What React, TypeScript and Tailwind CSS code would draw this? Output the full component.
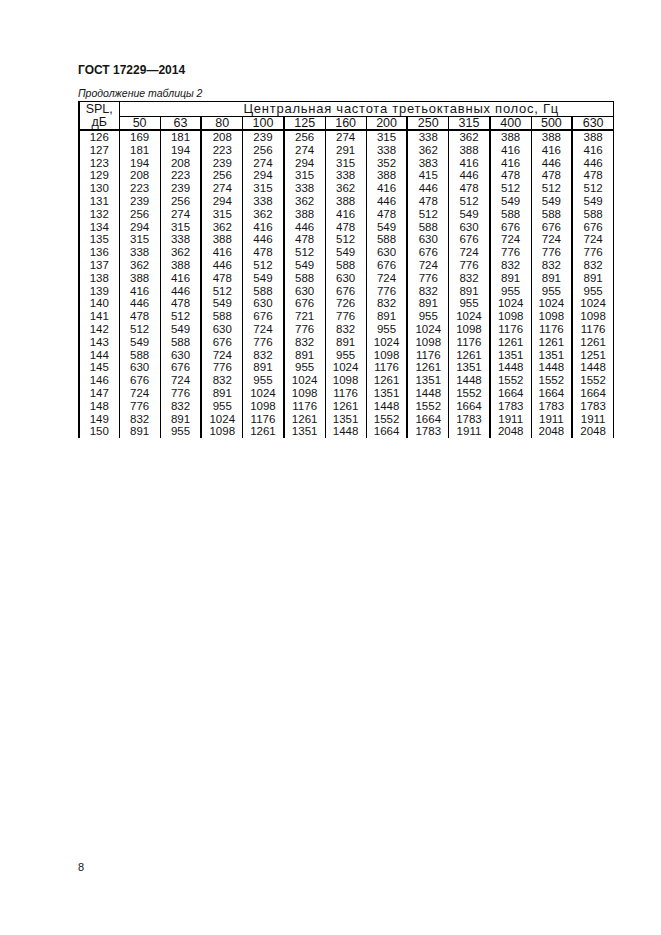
import React from 'react';

const freqs = ['50', '63', '80', '100', '125', '160', '200', '250', '315', '400', '500', '630'];

// SPL, dB -> values for each third-octave band
const rows: [string, string[]][] = [
  ['126', ['169', '181', '208', '239', '256', '274', '315', '338', '362', '388', '388', '388']],
  ['127', ['181', '194', '223', '256', '274', '291', '338', '362', '388', '416', '416', '416']],
  ['123', ['194', '208', '239', '274', '294', '315', '352', '383', '416', '416', '446', '446']],
  ['129', ['208', '223', '256', '294', '315', '338', '388', '415', '446', '478', '478', '478']],
  ['130', ['223', '239', '274', '315', '338', '362', '416', '446', '478', '512', '512', '512']],
  ['131', ['239', '256', '294', '338', '362', '388', '446', '478', '512', '549', '549', '549']],
  ['132', ['256', '274', '315', '362', '388', '416', '478', '512', '549', '588', '588', '588']],
  ['134', ['294', '315', '362', '416', '446', '478', '549', '588', '630', '676', '676', '676']],
  ['135', ['315', '338', '388', '446', '478', '512', '588', '630', '676', '724', '724', '724']],
  ['136', ['338', '362', '416', '478', '512', '549', '630', '676', '724', '776', '776', '776']],
  ['137', ['362', '388', '446', '512', '549', '588', '676', '724', '776', '832', '832', '832']],
  ['138', ['388', '416', '478', '549', '588', '630', '724', '776', '832', '891', '891', '891']],
  ['139', ['416', '446', '512', '588', '630', '676', '776', '832', '891', '955', '955', '955']],
  ['140', ['446', '478', '549', '630', '676', '726', '832', '891', '955', '1024', '1024', '1024']],
  ['141', ['478', '512', '588', '676', '721', '776', '891', '955', '1024', '1098', '1098', '1098']],
  ['142', ['512', '549', '630', '724', '776', '832', '955', '1024', '1098', '1176', '1176', '1176']],
  ['143', ['549', '588', '676', '776', '832', '891', '1024', '1098', '1176', '1261', '1261', '1261']],
  ['144', ['588', '630', '724', '832', '891', '955', '1098', '1176', '1261', '1351', '1351', '1251']],
  ['145', ['630', '676', '776', '891', '955', '1024', '1176', '1261', '1351', '1448', '1448', '1448']],
  ['146', ['676', '724', '832', '955', '1024', '1098', '1261', '1351', '1448', '1552', '1552', '1552']],
  ['147', ['724', '776', '891', '1024', '1098', '1176', '1351', '1448', '1552', '1664', '1664', '1664']],
  ['148', ['776', '832', '955', '1098', '1176', '1261', '1448', '1552', '1664', '1783', '1783', '1783']],
  ['149', ['832', '891', '1024', '1176', '1261', '1351', '1552', '1664', '1783', '1911', '1911', '1911']],
  ['150', ['891', '955', '1098', '1261', '1351', '1448', '1664', '1783', '1911', '2048', '2048', '2048']],
];

// left border of each band column (scan shows some rules heavier than others)
const colBorder = [
  'border-l border-l-black',
  'border-l border-l-black',
  'border-l-2 border-l-black',
  'border-l border-l-black',
  'border-l-2 border-l-black',
  'border-l border-l-black',
  'border-l border-l-black',
  'border-l-2 border-l-black',
  'border-l border-l-black',
  'border-l-2 border-l-black',
  'border-l border-l-black',
  'border-l-2 border-l-black',
];

export default function App() {
  return (
    <div
      className="w-[661px] h-[935px] bg-white text-[#151515] flex flex-col pl-[78px] pr-[47px]"
      style={{ fontFamily: '"Liberation Sans", Arial, sans-serif' }}
    >
      <div className="pt-[63px] text-[12px] leading-[14px] font-bold">ГОСТ 17229—2014</div>
      <div className="mt-[10px] text-[10.5px] leading-[13px] italic">Продолжение таблицы 2</div>

      <table className="mt-[1px] w-[536px] table-fixed border-collapse">
        <colgroup>
          <col className="w-[40px]" />
          {freqs.map((f) => (
            <col key={f} />
          ))}
        </colgroup>
        <thead>
          <tr>
            <th
              rowSpan={2}
              className="border-l-2 border-l-black border-t border-t-black border-b-2 border-b-black p-0 text-center align-top font-normal text-[12.5px] leading-[12.5px] pt-[1px]"
            >
              SPL,
              <br />
              дБ
            </th>
            <th
              colSpan={12}
              className="h-[15px] border-l border-l-black border-t border-t-black border-r border-r-black border-b border-b-black p-0 pl-[124px] text-left font-normal text-[13px] tracking-[0.75px] leading-[14px]"
            >
              Центральная частота третьоктавных полос, Гц
            </th>
          </tr>
          <tr>
            {freqs.map((f, i) => (
              <th
                key={f}
                className={`${colBorder[i]} ${i === 11 ? 'border-r border-r-black' : ''} h-[13px] border-b-2 border-b-black p-0 text-center font-normal text-[12.5px] leading-[12px]`}
              >
                {f}
              </th>
            ))}
          </tr>
        </thead>
        <tbody>
          {rows.map(([spl, vals]) => (
            <tr key={spl}>
              <td className="h-[12.8px] border-l-2 border-l-black p-0 text-center text-[11.5px] leading-[12.8px]">{spl}</td>
              {vals.map((v, i) => (
                <td
                  key={i}
                  className={`${colBorder[i]} ${i === 11 ? 'border-r border-r-black' : ''} h-[12.8px] p-0 text-center text-[11.5px] leading-[12.8px]`}
                >
                  {v}
                </td>
              ))}
            </tr>
          ))}
        </tbody>
      </table>

      <div className="mt-auto pb-[61.5px] text-[11px] leading-[13px]">8</div>
    </div>
  );
}
